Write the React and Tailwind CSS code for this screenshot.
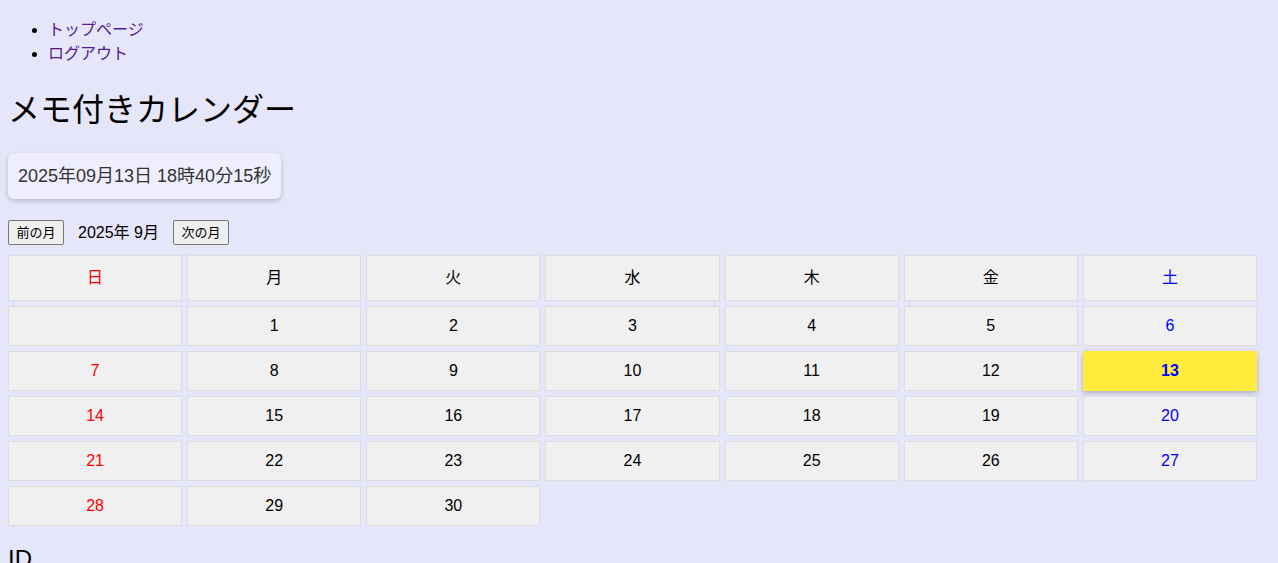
import React from "react";

const weekdays = ["日", "月", "火", "水", "木", "金", "土"];

// September 2025 starts on Monday
const cells = [null, ...Array.from({ length: 30 }, (_, i) => i + 1)];

const dayColor = (idx) => {
  if (idx % 7 === 0) return "text-[#ff0000]";
  if (idx % 7 === 6) return "text-[#0000ff]";
  return "text-black";
};

const App = () => {
  return (
    <div
      className="min-h-[900px] bg-[#e6e6fa] px-2 pt-[18px] text-black"
      style={{ fontFamily: '"Liberation Sans", Arial, "Noto Sans CJK JP", sans-serif' }}
    >
      {/* Nav */}
      <ul className="list-disc pl-10 text-base leading-6">
        <li>
          <a href="#" className="text-[#551a8b]">トップページ</a>
        </li>
        <li>
          <a href="#" className="text-[#551a8b]">ログアウト</a>
        </li>
      </ul>

      <h1 className="mt-[21px] mb-[20px] text-[32px] leading-[46px]">メモ付きカレンダー</h1>

      {/* Clock */}
      <div className="inline-block rounded-md bg-[#eeeefc] px-[10px] py-[10px] text-[18px] leading-[26px] text-[#333] shadow-[0_2px_5px_rgba(0,0,0,0.2)]">
        2025年09月13日 18時40分15秒
      </div>

      {/* Month nav */}
      <div className="mt-[21px] flex items-center">
        <button className="h-[25px] w-[56px] rounded-[2px] border border-[#767676] bg-[#efefef] text-[13px] leading-none">
          前の月
        </button>
        <span className="mx-[14px] text-base">2025年 9月</span>
        <button className="h-[25px] w-[56px] rounded-[2px] border border-[#767676] bg-[#efefef] text-[13px] leading-none">
          次の月
        </button>
      </div>

      {/* Calendar */}
      <div className="mt-[10px] grid w-[1249px] grid-cols-7 gap-[5px]">
        {weekdays.map((w, i) => (
          <div
            key={w}
            className={`flex h-[46px] items-center justify-center border border-[#dddddd] bg-[#f0f0f0] text-base ${dayColor(i)}`}
          >
            {w}
          </div>
        ))}
        {cells.map((d, i) =>
          d === 13 ? (
            <div
              key={i}
              className="flex h-[40px] items-center justify-center bg-[#ffeb3b] text-base font-bold text-[#0000ff] shadow-[0_2px_5px_rgba(0,0,0,0.25)]"
            >
              {d}
            </div>
          ) : (
            <div
              key={i}
              className={`flex h-[40px] items-center justify-center border border-[#dddddd] bg-[#f0f0f0] text-base ${dayColor(i)}`}
            >
              {d ?? ""}
            </div>
          )
        )}
      </div>

      {/* Memo form */}
      <h2 className="mt-[18px] text-[24px] leading-[30px]">ID</h2>
      <input className="mt-2 w-64 border border-[#767676] bg-white px-1" />
      <h2 className="mt-5 text-[24px] leading-[30px]">メモ</h2>
      <textarea className="mt-2 h-24 w-96 border border-[#767676] bg-white" />
    </div>
  );
};

export default App;
